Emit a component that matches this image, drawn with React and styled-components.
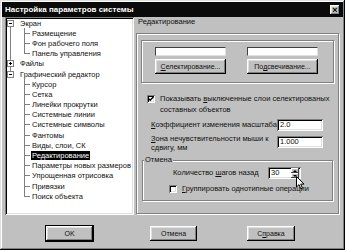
import styled, { createGlobalStyle } from 'styled-components';

const Global = createGlobalStyle`
  body { margin: 0; background: #c0c0c0; }
  * { box-sizing: border-box; }
`;

const raised = `
  box-shadow: inset -1px -1px #000, inset 1px 1px #fff,
    inset -2px -2px #808080, inset 2px 2px #dfdfdf;
`;
const sunken = `
  box-shadow: inset 1px 1px #808080, inset -1px -1px #fff,
    inset 2px 2px #000, inset -2px -2px #dfdfdf;
`;
const line = '#808080';

const Window = styled.div`
  position: relative;
  width: 345px;
  height: 250px;
  padding: 2px;
  background: #c0c0c0;
  font-family: "Liberation Sans", Arial, sans-serif;
  font-size: 7.5px;
  color: #111;
  box-shadow: inset -1px -1px #000, inset 1px 1px #dfdfdf,
    inset -2px -2px #808080, inset 2px 2px #fff;
  display: flex;
  flex-direction: column;
`;

const TitleBar = styled.div`
  height: 15px;
  background: #0a0a0a;
  color: #fff;
  font-weight: bold;
  font-size: 8px;
  display: flex;
  align-items: center;
  justify-content: space-between;
  padding: 0 3px 0 3px;
`;

const CloseButton = styled.div`
  width: 10px;
  height: 10px;
  background: #c0c0c0;
  ${raised}
  color: #000;
  font-size: 9px;
  line-height: 10px;
  text-align: center;
`;

const Main = styled.div`
  display: flex;
  gap: 2px;
  height: 198px;
  padding: 0 3px;
`;

const Tree = styled.div`
  width: 129px;
  background: #fff;
  ${sunken}
  padding: 1px 2px 2px 2px;
`;

const trunkBg = {
  full: `linear-gradient(${line},${line}) 3px 0 / 1px 100% no-repeat`,
  top: `linear-gradient(${line},${line}) 3px 0 / 1px 50% no-repeat`,
  bottom: `linear-gradient(${line},${line}) 3px 100% / 1px 50% no-repeat`,
};
const branchBg = {
  full: `linear-gradient(${line},${line}) 17px 0 / 1px 100% no-repeat, linear-gradient(${line},${line}) 17px 50% / 6px 1px no-repeat`,
  half: `linear-gradient(${line},${line}) 17px 0 / 1px 50% no-repeat, linear-gradient(${line},${line}) 17px 50% / 6px 1px no-repeat`,
};

const Row = styled.div`
  height: 10.2px;
  line-height: 10.2px;
  display: flex;
  align-items: center;
  white-space: nowrap;
  padding-left: ${p => (p.$child ? 24 : 0)}px;
  background: ${p => [p.$trunk && trunkBg[p.$trunk], p.$branch && branchBg[p.$branch]].filter(Boolean).join(', ') || 'none'};
`;

const Expander = styled.span`
  width: 7px;
  height: 7px;
  margin-right: 5px;
  border: 1px solid ${line};
  background: ${p => (p.$open ? '' : 'linear-gradient(#000,#000) 2px 1px / 1px 3px no-repeat,')}
    linear-gradient(#000,#000) 1px 2px / 3px 1px no-repeat, #fff;
`;

const Label = styled.span`
  padding: 0 1px;
  line-height: 9px;
  background: ${p => (p.$selected ? '#000' : 'transparent')};
  color: ${p => (p.$selected ? '#fff' : 'inherit')};
`;

const Right = styled.div`
  flex: 1;
  display: flex;
  flex-direction: column;
`;

const Header = styled.div`
  height: 16px;
  line-height: 10px;
  padding-left: 2px;
`;

const Page = styled.div`
  flex: 1;
  margin: 0 1px 1px 0;
  border: 1px solid ${line};
  box-shadow: inset 1px 1px #fff, 1px 1px #fff;
  display: flex;
  flex-direction: column;
`;

const Group = styled.div`
  margin: ${p => p.$margin};
  border: 1px solid ${line};
  box-shadow: inset 1px 1px #fff, 1px 1px #fff;
  padding: ${p => p.$padding};
`;

const Colors = styled.div`
  display: grid;
  grid-template-columns: 71px 71px;
  column-gap: 21px;
  row-gap: 3px;
  padding-left: 13px;
`;

const Swatch = styled.div`
  height: 9px;
  background: #fff;
  border: 1px solid #404040;
  border-right-color: #dfdfdf;
  border-bottom-color: #dfdfdf;
`;

const Button = styled.div`
  height: ${p => p.$h || 15}px;
  width: ${p => (p.$w ? `${p.$w}px` : 'auto')};
  margin-left: ${p => p.$ml || 0}px;
  background: #c0c0c0;
  ${raised}
  ${p => p.$default && 'outline: 1px solid #000;'}
  display: flex;
  align-items: center;
  justify-content: center;
  white-space: nowrap;
  font-size: 7px;
`;

const U = styled.span`
  text-decoration: underline;
  text-underline-offset: 1px;
`;

const CheckRow = styled.div`
  display: flex;
  align-items: ${p => (p.$top ? 'flex-start' : 'center')};
  gap: 5px;
  margin: ${p => p.$margin};
  line-height: ${p => p.$lh || 10}px;
  white-space: nowrap;
`;

const Box = styled.span`
  flex: none;
  width: 8px;
  height: 8px;
  margin-top: ${p => p.$mt || 0}px;
  background: #fff;
  ${sunken}
  display: flex;
  align-items: center;
  justify-content: center;
`;

const Field = styled.div`
  display: grid;
  grid-template-columns: ${p => p.$cols};
  align-items: ${p => (p.$top ? 'start' : 'center')};
  margin: ${p => p.$margin};
  line-height: ${p => p.$lh || 10}px;
  white-space: nowrap;
`;

const Input = styled.div`
  height: ${p => p.$h || 12}px;
  margin-top: ${p => p.$mt || 0}px;
  background: #fff;
  ${sunken}
  padding-left: 3px;
  line-height: ${p => p.$h || 12}px;
  display: flex;
  align-items: center;
  justify-content: space-between;
`;

const Legend = styled.div`
  margin: -6px 0 0 1px;
  padding: 0 1px;
  width: fit-content;
  background: #c0c0c0;
  line-height: 9px;
`;

const Spin = styled.div`
  display: flex;
  flex-direction: column;
  width: 8px;
  height: 10px;
  margin-right: 2px;
`;

const SpinPart = styled.div`
  flex: 1;
  background: #c0c0c0;
  box-shadow: inset -1px -1px #404040, inset 1px 1px #fff;
  display: flex;
  align-items: center;
  justify-content: center;
  &::before {
    content: '';
    border-left: 2px solid transparent;
    border-right: 2px solid transparent;
    ${p => (p.$up ? 'border-bottom: 2px solid #000;' : 'border-top: 2px solid #000;')}
  }
`;

const Footer = styled.div`
  flex: 1;
  display: flex;
  padding: 11px 0 0 44px;
`;

const Cursor = styled.svg`
  position: absolute;
  left: 296px;
  top: 176px;
`;

const tree = [
  { t: 'Экран', root: true, open: true, trunk: 'bottom' },
  { t: 'Размещение', trunk: 'full', branch: 'full' },
  { t: 'Фон рабочего поля', trunk: 'full', branch: 'full' },
  { t: 'Панель управления', trunk: 'full', branch: 'half' },
  { t: 'Файлы', root: true, open: false, trunk: 'full' },
  { t: 'Графический редактор', root: true, open: true, trunk: 'top' },
  { t: 'Курсор', branch: 'full' },
  { t: 'Сетка', branch: 'full' },
  { t: 'Линейки прокрутки', branch: 'full' },
  { t: 'Системные линии', branch: 'full' },
  { t: 'Системные символы', branch: 'full' },
  { t: 'Фантомы', branch: 'full' },
  { t: 'Виды, слои, СК', branch: 'full' },
  { t: 'Редактирование', branch: 'full', selected: true },
  { t: 'Параметры новых размеров', branch: 'full' },
  { t: 'Упрощенная отрисовка', branch: 'full' },
  { t: 'Привязки', branch: 'full' },
  { t: 'Поиск объекта', branch: 'half' },
];

export default function App() {
  return (
    <Window>
      <Global />
      <TitleBar>
        <span>Настройка параметров системы</span>
        <CloseButton>×</CloseButton>
      </TitleBar>
      <Main>
        <Tree>
          {tree.map(item => (
            <Row key={item.t} $child={!item.root} $trunk={item.trunk} $branch={item.branch}>
              {item.root && <Expander $open={item.open} />}
              <Label $selected={item.selected}>{item.t}</Label>
            </Row>
          ))}
        </Tree>
        <Right>
          <Header>Редактирование</Header>
          <Page>
            <Group $margin="6px 4px 0 4px" $padding="6px 0 8px 0">
              <Colors>
                <Swatch />
                <Swatch />
                <Button><U>С</U>електирование...</Button>
                <Button>По<U>д</U>свечивание...</Button>
              </Colors>
            </Group>
            <CheckRow $top $lh={11} $margin="10px 0 0 10px">
              <Box $mt={2}>
                <svg width="6" height="6" viewBox="0 0 6 6">
                  <path d="M0.5 2.5 L2.2 4.3 L5.5 0.8" fill="none" stroke="#000" strokeWidth="1.3" />
                </svg>
              </Box>
              <span>Показывать <U>в</U>ыключенные слои селектированых<br />составных объектов</span>
            </CheckRow>
            <Field $cols="126px 46px" $margin="4px 0 0 14px">
              <span><U>К</U>оэффициент изменения масштаба</span>
              <Input>2.0</Input>
            </Field>
            <Field $top $lh={9} $cols="126px 46px" $margin="3px 0 0 14px">
              <span><U>З</U>она нечувствительности мыши к<br />сдвигу, мм</span>
              <Input $mt={2}>1.000</Input>
            </Field>
            <Group $margin="8px 5px 0 5px" $padding="0 0 6px 0">
              <Legend>Отмена</Legend>
              <Field $cols="95px 33px" $margin="3px 0 0 30px">
                <span>Количество <U>ш</U>агов назад</span>
                <Input>
                  30
                  <Spin>
                    <SpinPart $up />
                    <SpinPart />
                  </Spin>
                </Input>
              </Field>
              <CheckRow $margin="5px 0 0 26px">
                <Box />
                <span><U>Г</U>руппировать однотипные операции</span>
              </CheckRow>
            </Group>
          </Page>
        </Right>
      </Main>
      <Footer>
        <Button $w={47} $default>OK</Button>
        <Button $w={47} $ml={57}>Отмена</Button>
        <Button $w={48} $ml={50}>С<U>п</U>равка</Button>
      </Footer>
      <Cursor width="9" height="14" viewBox="0 0 9 14">
        <path d="M0.5 0.5 L0.5 11 L3 8.6 L4.8 12.8 L6.4 12.1 L4.7 8.1 L8 8.1 Z" fill="#fff" stroke="#000" strokeWidth="1" />
      </Cursor>
    </Window>
  );
}
